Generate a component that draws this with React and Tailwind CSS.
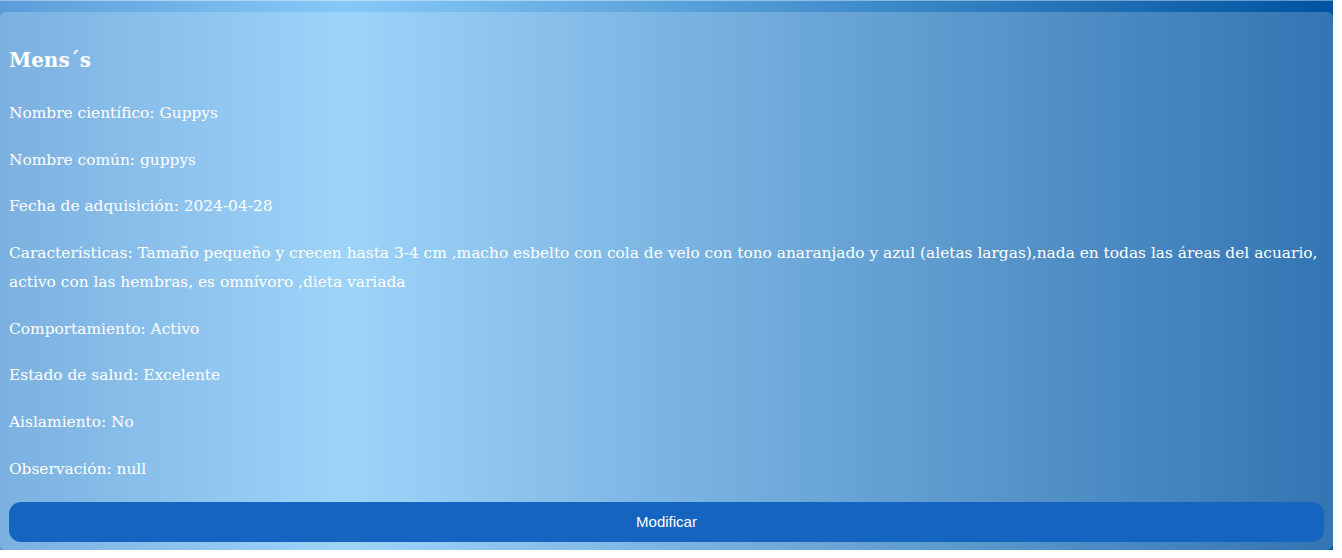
const fish = {
  nombre: "Mens´s",
  cientifico: "Guppys",
  comun: "guppys",
  fecha: "2024-04-28",
  caracteristicas:
    "Tamaño pequeño y crecen hasta 3-4 cm ,macho esbelto con cola de velo con tono anaranjado y azul (aletas largas),nada en todas las áreas del acuario, activo con las hembras, es omnívoro ,dieta variada",
  comportamiento: "Activo",
  salud: "Excelente",
  aislamiento: "No",
  observacion: "null",
};

const fields = [
  ["Nombre científico", fish.cientifico],
  ["Nombre común", fish.comun],
  ["Fecha de adquisición", fish.fecha],
  ["Características", fish.caracteristicas],
  ["Comportamiento", fish.comportamiento],
  ["Estado de salud", fish.salud],
  ["Aislamiento", fish.aislamiento],
  ["Observación", fish.observacion],
];

export default function App() {
  return (
    <div className="w-[1333px] border-t border-white/40 bg-[linear-gradient(to_right,#5b9dd9_0%,#86c9f8_26%,#0053a0_100%)] pt-[11px]">
      <div className="rounded-md bg-white/20 px-[9px] pt-[34px] pb-2 text-white font-['DejaVu_Serif',serif]">
        <h3 className="mb-[25px] text-[20px] font-bold leading-[28px]">{fish.nombre}</h3>
        <div className="flex flex-col gap-[17.7px]">
          {fields.map(([label, value]) => (
            <p key={label} className="text-[15.4px] leading-[29px]">
              {label}: {value}
            </p>
          ))}
        </div>
        <button
          type="button"
          className="mt-[18px] h-10 w-full rounded-xl bg-[#1565c0] text-[15px] text-white font-['Liberation_Sans',Arial,sans-serif]"
        >
          Modificar
        </button>
      </div>
    </div>
  );
}
